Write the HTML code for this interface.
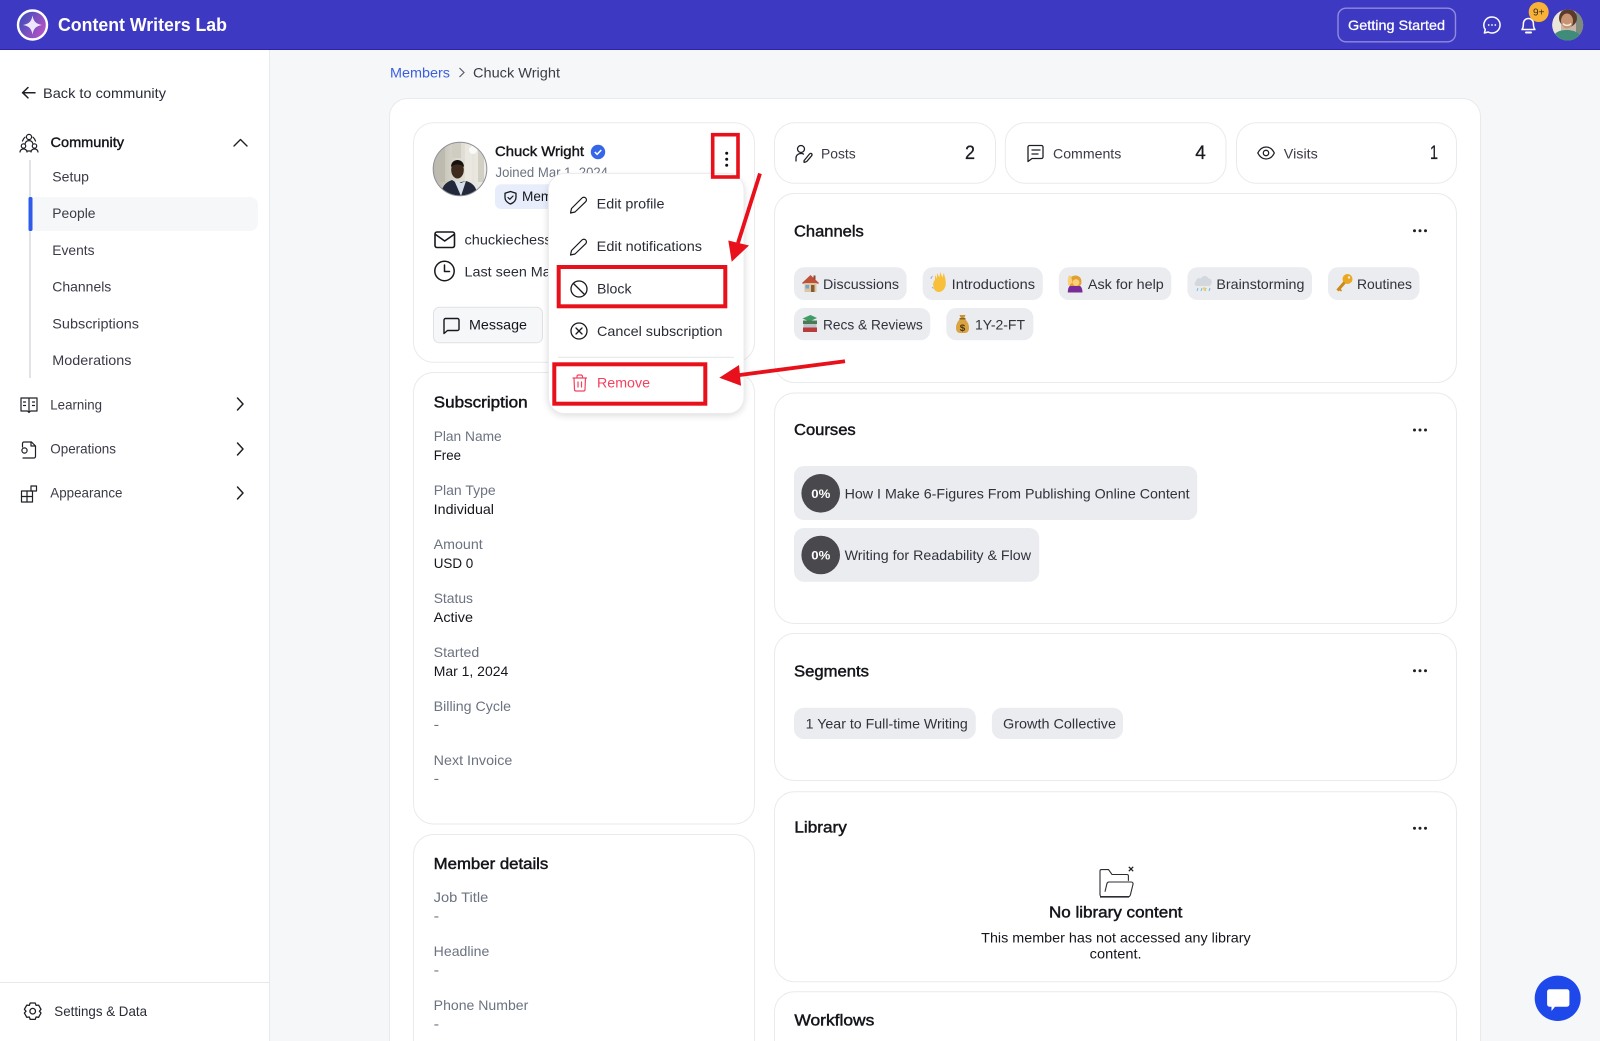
<!DOCTYPE html>
<html lang="en"><head><meta charset="utf-8"><title>Content Writers Lab - Chuck Wright</title>
<style>
html,body{margin:0;padding:0;width:1600px;height:1041px;overflow:hidden;background:#f6f7f9}
svg{display:block}
text{font-family:"Liberation Sans",sans-serif;font-size:14px;fill:#2a2c36}
.b{fill:#14151a;stroke:#14151a;stroke-width:.4}
.g{fill:#6b7280}
.d{fill:#15161c}
.t{font-size:15.5px;fill:#14151a;stroke:#14151a;stroke-width:.45}
.nav{fill:#3a3b46}
.chip{fill:#30323c}
.num{font-size:19px;fill:#1a1b20;stroke:#1a1b20;stroke-width:.3}
.card{fill:#fff;stroke:#e9eaed;stroke-width:1}
.c{fill:#ebecf0}
.i{fill:none;stroke:#17181d;stroke-width:1.5;stroke-linecap:round;stroke-linejoin:round}
.n{fill:none;stroke:#1f2026;stroke-width:1.3;stroke-linecap:round;stroke-linejoin:round}
.red{fill:none;stroke:#e8101a;stroke-width:4}
</style></head>
<body>
<svg width="1600" height="1041" viewBox="0 0 1600 1041" xmlns="http://www.w3.org/2000/svg">
<defs>
<linearGradient id="lg" x1="0" y1="0" x2="1" y2=".6"><stop offset="0" stop-color="#2a4cb8"/><stop offset="1" stop-color="#b552c6"/></linearGradient>
<linearGradient id="wall" x1="0" y1="0" x2="1" y2="0"><stop offset="0" stop-color="#b9b6a8"/><stop offset=".45" stop-color="#dcd9cf"/><stop offset="1" stop-color="#efeee9"/></linearGradient>
<clipPath id="av1"><circle cx="460" cy="169" r="26.5"/></clipPath>
<clipPath id="av2"><circle cx="1567.7" cy="25" r="15.5"/></clipPath>
<filter id="sh" x="-20%" y="-20%" width="140%" height="140%"><feGaussianBlur stdDeviation="4"/></filter>
</defs>

<!-- page bg -->
<rect width="1600" height="1041" fill="#f6f7f9"/>

<!-- sidebar -->
<rect x="0" y="49" width="269" height="992" fill="#fff"/>
<rect x="269" y="49" width="1" height="992" fill="#e9eaed"/>
<rect x="0" y="982" width="269" height="1" fill="#e6e7ea"/>

<!-- header -->
<rect width="1600" height="49.5" fill="#3e39c3"/>
<rect y="49" width="1600" height="1" fill="#2c22ad"/>
<circle cx="32.5" cy="25" r="14.5" fill="url(#lg)" stroke="#fff" stroke-width="2.4"/>
<path d="M32.5 15.5C33.6 21.5 36 23.9 42 25 36 26.1 33.6 28.5 32.5 34.5 31.4 28.5 29 26.1 23 25 29 23.9 31.4 21.5 32.5 15.5Z" fill="#ece7fb"/>
<text x="58" y="31" textLength="169" lengthAdjust="spacingAndGlyphs" style="font-size:18px;font-weight:700;fill:#fff">Content Writers Lab</text>
<rect x="1338" y="8.2" width="117.5" height="33.6" rx="8" fill="none" stroke="#8f8bdd" stroke-width="1.4"/>
<text x="1348" y="29.8" textLength="97" lengthAdjust="spacingAndGlyphs" style="fill:#fff;stroke:#fff;stroke-width:.25">Getting Started</text>
<path d="M1492 17a8 8 0 1 1-3.800 15l-3.800 1 .9-3.400A8 8 0 0 1 1492 17Z" fill="none" stroke="#fff" stroke-width="1.5" stroke-linejoin="round"/>
<circle cx="1488.700" cy="25" r=".9" fill="#fff"/><circle cx="1492" cy="25" r=".9" fill="#fff"/><circle cx="1495.300" cy="25" r=".9" fill="#fff"/>
<path d="M1522 29.500c1.200-1.600 1.400-3.200 1.400-6a5 5 0 0 1 10 0c0 2.800.3 4.400 1.500 6Z" fill="none" stroke="#fff" stroke-width="1.500" stroke-linejoin="round"/>
<path d="M1526 32.500h5" stroke="#fff" stroke-width="2" stroke-linecap="round"/>
<circle cx="1538.700" cy="12" r="10" fill="#f9b238"/>
<text x="1533" y="15.500" textLength="11.500" lengthAdjust="spacingAndGlyphs" style="font-size:10px;fill:#3a2f1a">9+</text>
<g clip-path="url(#av2)">
<rect x="1552" y="9" width="32" height="32" fill="#c9b8a8"/>
<rect x="1552" y="9" width="9" height="32" fill="#e9e6dc"/>
<rect x="1576" y="9" width="8" height="32" fill="#7d8a7c"/>
<ellipse cx="1568" cy="18" rx="9" ry="9" fill="#5a3b2b"/>
<ellipse cx="1567" cy="21" rx="6" ry="7.500" fill="#c79372"/>
<path d="M1563 23.500c2 2.500 6 2.500 8 0" stroke="#f4ece4" stroke-width="1.500" fill="none"/>
<path d="M1552 41c1-9 8-11 15-11s14 3 16 11Z" fill="#3f8c7a"/>
</g>

<!-- sidebar nav -->
<path d="M22.500 92.700h12.500M28 87.500l-5.300 5.200 5.300 5.200" class="n" style="stroke-width:1.500"/>
<text x="43" y="98" textLength="123" lengthAdjust="spacingAndGlyphs">Back to community</text>

<g class="n" style="stroke-width:1.200">
<circle cx="29" cy="137" r="2.600"/><path d="M25 144c.5-2.500 2-3.400 4-3.400s3.500.9 4 3.400"/>
<circle cx="23.500" cy="146" r="2.200"/><circle cx="34.500" cy="146" r="2.200"/>
<path d="M20 152c.3-2 1.700-3 3.500-3s3.200 1 3.500 3M31 152c.3-2 1.700-3 3.500-3s3.200 1 3.500 3M27 151h4M22.500 141c.7-2 1.500-3 2.500-3.800M35.500 141c-.7-2-1.500-3-2.500-3.800"/>
</g>
<text x="50.500" y="147" textLength="73.500" lengthAdjust="spacingAndGlyphs" class="b">Community</text>
<path d="M234 146l6.500-6.500 6.500 6.500" class="n" style="stroke-width:1.400"/>
<rect x="29" y="160" width="2" height="218" fill="#e2e3e6"/>
<rect x="29" y="197" width="229" height="34" rx="8" fill="#f6f7f9"/>
<rect x="28.500" y="197" width="4" height="34" rx="1.500" fill="#2f5bea"/>
<text class="nav" x="52.300" y="181.500" textLength="36.700" lengthAdjust="spacingAndGlyphs">Setup</text>
<text class="nav" x="52.300" y="218" textLength="43.200" lengthAdjust="spacingAndGlyphs">People</text>
<text class="nav" x="52.300" y="255" textLength="42.200" lengthAdjust="spacingAndGlyphs">Events</text>
<text class="nav" x="52.300" y="291.700" textLength="59" lengthAdjust="spacingAndGlyphs">Channels</text>
<text class="nav" x="52.300" y="328.300" textLength="86.700" lengthAdjust="spacingAndGlyphs">Subscriptions</text>
<text class="nav" x="52.300" y="365" textLength="79.200" lengthAdjust="spacingAndGlyphs">Moderations</text>

<g class="n" style="stroke-width:1.200">
<path d="M21 398h8v14.500l-1.500-1.500H21ZM37 398h-8v14.500l1.500-1.500H37Z"/><path d="M23.500 402h2M23.500 405.500h2M32.500 402h2M32.500 405.500h2"/>
</g>
<text class="nav" x="50.300" y="409.300" textLength="51.700" lengthAdjust="spacingAndGlyphs">Learning</text>
<path d="M237.500 398l5.500 6-5.500 6" class="n" style="stroke-width:1.500"/>

<g class="n" style="stroke-width:1.200">
<path d="M22.500 447v-3.500c0-.8.700-1.500 1.500-1.500h7.500l4 4v10.500c0 .8-.7 1.500-1.500 1.500H23"/><path d="M31 442v4h4.500"/><circle cx="24.500" cy="450.500" r="2.600"/>
</g>
<text class="nav" x="50.300" y="453.300" textLength="65.700" lengthAdjust="spacingAndGlyphs">Operations</text>
<path d="M237.500 443l5.500 6-5.500 6" class="n" style="stroke-width:1.500"/>

<g class="n" style="stroke-width:1.200">
<rect x="21.500" y="491" width="11" height="11"/><path d="M27 491v11M21.500 496.500h11"/><rect x="31" y="486" width="5.500" height="5"/>
</g>
<text class="nav" x="50.300" y="497.700" textLength="72.200" lengthAdjust="spacingAndGlyphs">Appearance</text>
<path d="M237.500 487l5.500 6-5.500 6" class="n" style="stroke-width:1.500"/>

<g class="n" style="stroke-width:1.300">
<path d="M30.200 1003h5l.9 2.400 2.500-.3 2.400 4.200-1.600 1.900 1.600 1.900-2.400 4.200-2.500-.3-.9 2.400h-5l-.9-2.400-2.500.3-2.400-4.200 1.600-1.900-1.600-1.900 2.400-4.200 2.500.3Z"/><circle cx="32.700" cy="1011.200" r="2.800"/>
</g>
<text x="54.300" y="1016" textLength="92.700" lengthAdjust="spacingAndGlyphs">Settings &amp; Data</text>

<!-- breadcrumb -->
<text x="390" y="77.500" textLength="60" lengthAdjust="spacingAndGlyphs" style="fill:#3b5ee0">Members</text>
<path d="M459.500 68l4.500 4.500-4.500 4.500" fill="none" stroke="#5a5d68" stroke-width="1.200"/>
<text x="473" y="77.500" textLength="87" lengthAdjust="spacingAndGlyphs" style="fill:#3a3b46">Chuck Wright</text>

<!-- main panel -->
<path d="M389.500 1041V116.500a18 18 0 0 1 18-18H1462.500a18 18 0 0 1 18 18V1041Z" fill="#fff"/>
<path d="M389.500 1041V116.500a18 18 0 0 1 18-18H1462.500a18 18 0 0 1 18 18V1041" fill="none" stroke="#e9eaed"/>

<!-- profile card -->
<rect x="413.500" y="122.700" width="341" height="239.600" rx="20" class="card"/>
<g clip-path="url(#av1)">
<rect x="433" y="142" width="54" height="54" fill="url(#wall)"/>
<rect x="436" y="142" width="9" height="40" fill="#bdbab0"/><rect x="452" y="142" width="9" height="16" fill="#cfccc1"/><rect x="465" y="142" width="7" height="40" fill="#e9e7df"/><rect x="478" y="142" width="6" height="40" fill="#d2cfc4"/>
<circle cx="473" cy="150" r="4" fill="#fafaf6"/>
<ellipse cx="457.500" cy="170" rx="6.300" ry="8.500" fill="#3f2a1e"/>
<path d="M451 167c0-4.500 3-7 6.500-7s6.500 2.500 6.500 7c-2-2-4-2.500-6.500-2.500s-4.500.5-6.500 2.500Z" fill="#17120f"/>
<path d="M441 198c0-10 3-15 11-18l5 3 9-2c7 2 11 6 12 17Z" fill="#23283a"/>
<path d="M454 180l7 16 5-15-5 2Z" fill="#d7deea"/>
</g>
<circle cx="460" cy="169" r="26.800" fill="none" stroke="#8c8d96" stroke-width="1"/>
<text x="495" y="156" textLength="89" lengthAdjust="spacingAndGlyphs" class="b">Chuck Wright</text>
<circle cx="598" cy="152" r="7.200" fill="#3565e8"/>
<path d="M594.800 152l2.300 2.300 4.200-4.300" fill="none" stroke="#fff" stroke-width="1.500"/>
<text class="g" x="495.500" y="177" textLength="112.500" lengthAdjust="spacingAndGlyphs">Joined Mar 1, 2024</text>
<rect x="495" y="184.300" width="70" height="24.700" rx="6" fill="#e8edfb"/>
<path d="M510.500 191.500l5.500 1.800v4c0 3.300-2.300 5.500-5.500 6.700-3.200-1.200-5.500-3.400-5.500-6.700v-4Z" class="i" style="stroke-width:1.300"/>
<path d="M508 197.500l1.800 1.800 3.200-3.300" class="i" style="stroke-width:1.200"/>
<text x="522" y="201" textLength="50" lengthAdjust="spacingAndGlyphs" class="d">Member</text>
<rect x="435" y="232" width="19.500" height="15.500" rx="2" class="i" style="stroke-width:1.600"/>
<path d="M435.500 234.500l9.200 6.500 9.300-6.500" class="i" style="stroke-width:1.600"/>
<text x="464.500" y="244.300" textLength="168" lengthAdjust="spacingAndGlyphs">chuckiechess@gmail.com</text>
<circle cx="444.500" cy="271" r="9.700" class="i" style="stroke-width:1.500"/>
<path d="M444.500 265v6.500h5" class="i" style="stroke-width:1.500"/>
<text x="464.500" y="276.700" textLength="143" lengthAdjust="spacingAndGlyphs">Last seen Mar 1, 2024</text>
<rect x="433.500" y="307.300" width="109" height="35.500" rx="6" fill="#f6f7f9" stroke="#dfe1e5"/>
<path d="M445.500 318.500h12c.8 0 1.500.7 1.500 1.500v9c0 .8-.7 1.500-1.500 1.500h-10l-3.500 3v-13.500c0-.8.700-1.500 1.500-1.500Z" class="i" style="stroke-width:1.400"/>
<text x="469" y="329.300" textLength="58" lengthAdjust="spacingAndGlyphs" class="d">Message</text>
<circle cx="726.700" cy="153.300" r="1.500" fill="#111"/><circle cx="726.700" cy="159.300" r="1.500" fill="#111"/><circle cx="726.700" cy="165.200" r="1.500" fill="#111"/>

<!-- subscription card -->
<rect x="413.500" y="372.500" width="341" height="451.500" rx="20" class="card"/>
<text x="433.700" y="407.400" textLength="94" lengthAdjust="spacingAndGlyphs" class="t">Subscription</text>
<text class="g" x="433.700" y="441" textLength="68" lengthAdjust="spacingAndGlyphs">Plan Name</text>
<text class="d" x="433.700" y="460" textLength="27.300" lengthAdjust="spacingAndGlyphs">Free</text>
<text class="g" x="433.700" y="495" textLength="62" lengthAdjust="spacingAndGlyphs">Plan Type</text>
<text class="d" x="433.700" y="514" textLength="60.300" lengthAdjust="spacingAndGlyphs">Individual</text>
<text class="g" x="433.700" y="549" textLength="49" lengthAdjust="spacingAndGlyphs">Amount</text>
<text class="d" x="433.700" y="568" textLength="39.600" lengthAdjust="spacingAndGlyphs">USD 0</text>
<text class="g" x="433.700" y="603" textLength="39.300" lengthAdjust="spacingAndGlyphs">Status</text>
<text class="d" x="433.700" y="622" textLength="39.300" lengthAdjust="spacingAndGlyphs">Active</text>
<text class="g" x="433.700" y="657" textLength="45.600" lengthAdjust="spacingAndGlyphs">Started</text>
<text class="d" x="433.700" y="676" textLength="74.600" lengthAdjust="spacingAndGlyphs">Mar 1, 2024</text>
<text class="g" x="433.700" y="711" textLength="77.300" lengthAdjust="spacingAndGlyphs">Billing Cycle</text>
<text class="g" x="433.700" y="729" textLength="5.500" lengthAdjust="spacingAndGlyphs">-</text>
<text class="g" x="433.700" y="765" textLength="78.600" lengthAdjust="spacingAndGlyphs">Next Invoice</text>
<text class="g" x="433.700" y="783" textLength="5.500" lengthAdjust="spacingAndGlyphs">-</text>

<!-- member details -->
<path d="M413.500 1041V854.500a20 20 0 0 1 20-20H734.500a20 20 0 0 1 20 20V1041" class="card"/>
<text x="433.700" y="869" textLength="114.600" lengthAdjust="spacingAndGlyphs" class="t">Member details</text>
<text class="g" x="433.700" y="902" textLength="54.600" lengthAdjust="spacingAndGlyphs">Job Title</text>
<text class="g" x="433.700" y="920.500" textLength="5.500" lengthAdjust="spacingAndGlyphs">-</text>
<text class="g" x="433.700" y="956" textLength="55.600" lengthAdjust="spacingAndGlyphs">Headline</text>
<text class="g" x="433.700" y="974.500" textLength="5.500" lengthAdjust="spacingAndGlyphs">-</text>
<text class="g" x="433.700" y="1010" textLength="94.600" lengthAdjust="spacingAndGlyphs">Phone Number</text>
<text class="g" x="433.700" y="1028.500" textLength="5.500" lengthAdjust="spacingAndGlyphs">-</text>

<!-- stat cards -->
<rect x="774.500" y="122.700" width="221" height="60.600" rx="20" class="card"/>
<rect x="1005.300" y="122.700" width="220.700" height="60.600" rx="20" class="card"/>
<rect x="1236.500" y="122.700" width="220" height="60.600" rx="20" class="card"/>
<g class="n" style="stroke-width:1.300">
<circle cx="801" cy="149" r="3.500"/><path d="M796 161v-3c0-2.500 2-4.500 5-4.500 1 0 1.800.2 2.500.6"/><path d="M805 159.500l4.500-5.500c.7-.8 1.800-.8 2.200-.2.500.6.400 1.500-.3 2.300l-4.500 5.200c-.8.800-2.800 1-2.800 1s-.5-1.800.9-2.800Z"/>
</g>
<text x="821" y="158.300" textLength="34.700" lengthAdjust="spacingAndGlyphs" class="nav">Posts</text>
<text x="965" y="159" textLength="10" lengthAdjust="spacingAndGlyphs" class="num">2</text>
<path d="M1029.500 145.500h12c.8 0 1.500.7 1.500 1.500v10c0 .8-.7 1.500-1.500 1.500h-9.500l-4 3v-14.500c0-.8.700-1.500 1.500-1.500Z" class="n"/>
<path d="M1032 150h8M1032 154h6" class="n"/>
<text x="1053" y="158.300" textLength="68.300" lengthAdjust="spacingAndGlyphs" class="nav">Comments</text>
<text x="1195.300" y="159" textLength="10.500" lengthAdjust="spacingAndGlyphs" class="num">4</text>
<path d="M1257.800 153c2-4 5-6 8.300-6s6.300 2 8.200 6c-1.900 4-4.900 6-8.200 6s-6.300-2-8.300-6Z" class="n"/>
<circle cx="1266" cy="153" r="2.700" class="n"/>
<text x="1283.800" y="158.300" textLength="34" lengthAdjust="spacingAndGlyphs" class="nav">Visits</text>
<text x="1430" y="159" textLength="8" lengthAdjust="spacingAndGlyphs" class="num">1</text>

<!-- channels -->
<rect x="774.500" y="193.500" width="682" height="189" rx="20" class="card"/>
<text x="794" y="236.700" textLength="69.800" lengthAdjust="spacingAndGlyphs" class="t">Channels</text>
<g fill="#222"><circle cx="1414.500" cy="230.700" r="1.500"/><circle cx="1420" cy="230.700" r="1.500"/><circle cx="1425.500" cy="230.700" r="1.500"/></g>

<rect class="c" x="794" y="267.300" width="112.600" height="32.700" rx="10"/>
<rect class="c" x="922.700" y="267.300" width="120.100" height="32.700" rx="10"/>
<rect class="c" x="1058.800" y="267.300" width="112.500" height="32.700" rx="10"/>
<rect class="c" x="1187.400" y="267.300" width="124.600" height="32.700" rx="10"/>
<rect class="c" x="1328" y="267.300" width="91.500" height="32.700" rx="10"/>
<rect class="c" x="794" y="308" width="136.300" height="32.300" rx="10"/>
<rect class="c" x="946.300" y="308" width="87.100" height="32.300" rx="10"/>

<!-- house -->
<path d="M802.500 283.500l8-7.500 8 7.500" fill="#c0503a" stroke="#c0503a" stroke-width="1.500"/>
<rect x="804.500" y="283" width="12" height="9" fill="#d9c6a2"/>
<rect x="805.500" y="285" width="3.500" height="3.500" fill="#6fa6d8"/><rect x="811" y="285" width="3.500" height="7" fill="#8a5a33"/>
<rect x="813.500" y="275.500" width="2" height="4" fill="#8a4a33"/>
<text class="chip" x="823" y="289" textLength="76" lengthAdjust="spacingAndGlyphs">Discussions</text>

<!-- wave -->
<path d="M933.500 283l.5-3 1 1 0-6 1.800 3.500.3-5.500 2.200 4.500 1-5.500 2 5.500 1.500-4.500 1.500 5.500.5 4c.5 5-3 9.500-7 9.500s-5.500-3.500-5.800-9Z" fill="#f8c03a"/>
<path d="M931 279c0-1 .5-2 1.500-3M932 287l1.500 1.500" stroke="#9fb0c4" stroke-width="1" fill="none"/>
<text class="chip" x="951.700" y="289" textLength="83.300" lengthAdjust="spacingAndGlyphs">Introductions</text>

<!-- raise hand -->
<path d="M1067.800 292.500c0-6 2-8 7-8s7.700 2 7.700 8Z" fill="#7a2b9a"/>
<path d="M1069 282c0-4 3-6.500 6.500-6.500s6 2.500 6 6.500c0 2-1 3.500-2 4h-9c-1-.5-1.500-2-1.500-4Z" fill="#e0a032"/>
<circle cx="1076" cy="282.500" r="3.400" fill="#fbcf7a"/>
<path d="M1068.500 286c-1-3-.8-7 0-10l2.500-.5 1.500 7Z" fill="#fbcf7a"/>
<text class="chip" x="1087.900" y="289" textLength="75.900" lengthAdjust="spacingAndGlyphs">Ask for help</text>

<!-- cloud -->
<path d="M1197 286c-2.500 0-3.500-3.500-1-4.500 0-3 3-4 5-3 1-3 6-3.500 7.500 0 3-.5 4.500 4 2 6.500 0 1-1 1-2 1Z" fill="#d3d8df"/>
<path d="M1198 288l-1 3M1202 288l-1 3M1206 288l-1 3M1210 288l-1 3" stroke="#75b5e6" stroke-width="1"/>
<path d="M1204.500 287l-1 2h2l-1 2" stroke="#f5c63b" stroke-width="1" fill="none"/>
<text class="chip" x="1216.400" y="289" textLength="88" lengthAdjust="spacingAndGlyphs">Brainstorming</text>

<!-- key -->
<circle cx="1347.500" cy="279" r="5" fill="#eba71f"/>
<circle cx="1349" cy="277.500" r="1.200" fill="#ebecf0"/>
<path d="M1344.500 282.500l-7 8" stroke="#c98a17" stroke-width="3"/>
<path d="M1339.500 289l2 2" stroke="#c98a17" stroke-width="1.600"/>
<text class="chip" x="1357" y="289" textLength="55" lengthAdjust="spacingAndGlyphs">Routines</text>

<!-- books -->
<path d="M802.500 318.500l8-3.500 6.500 3-7.500 3.500Z" fill="#3e9c64"/>
<rect x="803" y="320.500" width="14" height="3.500" fill="#4a7a58"/>
<rect x="803.500" y="324" width="13" height="3.500" fill="#bcc4cc"/>
<rect x="803" y="327.500" width="14" height="4.500" fill="#b83c3c"/>
<text class="chip" x="823" y="329.300" textLength="99.700" lengthAdjust="spacingAndGlyphs">Recs &amp; Reviews</text>

<!-- bag -->
<path d="M960 319c-3 3-4 6-4 9 0 3 1.500 5 4 5h5c2.500 0 4-2 4-5 0-3-1-6-4-9Z" fill="#d9a441"/>
<path d="M959.500 315h6l-1.500 3.500h-3Z" fill="#c89234"/>
<rect x="959.500" y="318" width="6" height="1.500" fill="#8a6420"/>
<text x="959.800" y="331" textLength="5.500" lengthAdjust="spacingAndGlyphs" style="font-size:9px;font-weight:700;fill:#4b3410">$</text>
<text class="chip" x="975" y="329.300" textLength="50" lengthAdjust="spacingAndGlyphs">1Y-2-FT</text>

<!-- courses -->
<rect x="774.500" y="393" width="682" height="230.500" rx="20" class="card"/>
<text x="794" y="435" textLength="61.700" lengthAdjust="spacingAndGlyphs" class="t">Courses</text>
<g fill="#222"><circle cx="1414.500" cy="430" r="1.500"/><circle cx="1420" cy="430" r="1.500"/><circle cx="1425.500" cy="430" r="1.500"/></g>
<rect class="c" x="794" y="466" width="403.200" height="54" rx="10"/>
<circle cx="820.700" cy="493.300" r="19.300" fill="#48484d"/>
<text x="811.300" y="497.800" textLength="19" lengthAdjust="spacingAndGlyphs" style="font-size:12px;font-weight:700;fill:#fff">0%</text>
<text class="chip" x="844.600" y="498.300" textLength="345" lengthAdjust="spacingAndGlyphs">How I Make 6-Figures From Publishing Online Content</text>
<rect class="c" x="794" y="528" width="245.200" height="53.700" rx="10"/>
<circle cx="820.700" cy="555" r="19.300" fill="#48484d"/>
<text x="811.300" y="559.500" textLength="19" lengthAdjust="spacingAndGlyphs" style="font-size:12px;font-weight:700;fill:#fff">0%</text>
<text class="chip" x="844.600" y="560" textLength="186.400" lengthAdjust="spacingAndGlyphs">Writing for Readability &amp; Flow</text>

<!-- segments -->
<rect x="774.500" y="633.500" width="682" height="147" rx="20" class="card"/>
<text x="794" y="676.700" textLength="75" lengthAdjust="spacingAndGlyphs" class="t">Segments</text>
<g fill="#222"><circle cx="1414.500" cy="670.700" r="1.500"/><circle cx="1420" cy="670.700" r="1.500"/><circle cx="1425.500" cy="670.700" r="1.500"/></g>
<rect class="c" x="794" y="707.700" width="181.800" height="31.300" rx="10"/>
<text class="chip" x="805.700" y="728.300" textLength="162.100" lengthAdjust="spacingAndGlyphs">1 Year to Full-time Writing</text>
<rect class="c" x="991.900" y="707.700" width="131.100" height="31.300" rx="10"/>
<text class="chip" x="1003" y="728.300" textLength="113" lengthAdjust="spacingAndGlyphs">Growth Collective</text>

<!-- library -->
<rect x="774.500" y="791.700" width="682" height="190" rx="20" class="card"/>
<text x="794.400" y="832.700" textLength="52.400" lengthAdjust="spacingAndGlyphs" class="t">Library</text>
<g fill="#222"><circle cx="1414.500" cy="828.300" r="1.500"/><circle cx="1420" cy="828.300" r="1.500"/><circle cx="1425.500" cy="828.300" r="1.500"/></g>
<path d="M1100 895v-24c0-.8.600-1.400 1.400-1.400h7.100l3.500 4.900h15c.8 0 1.400.6 1.400 1.400v5" fill="none" stroke="#2c2d33" stroke-width="1.100"/>
<path d="M1100 894.500c0 1.300.9 2.300 2 2.300h26c1.200 0 2-.7 2.400-2l2.600-10.500c.3-1.300-.5-2.300-1.700-2.300h-22.300c-1.100 0-1.800.6-2.100 1.700l-1.900 8" fill="none" stroke="#2c2d33" stroke-width="1.100"/>
<path d="M1100 896.800h29" stroke="#2c2d33" stroke-width="1.600"/>
<path d="M1128.800 866.800l4.400 4.400M1133.200 866.800l-4.400 4.400" stroke="#222" stroke-width="1.300"/>
<text x="1049" y="917.300" textLength="133.400" lengthAdjust="spacingAndGlyphs" class="t">No library content</text>
<text x="981.200" y="942.300" textLength="269.500" lengthAdjust="spacingAndGlyphs" class="d">This member has not accessed any library</text>
<text x="1089.700" y="958.300" textLength="51.900" lengthAdjust="spacingAndGlyphs" class="d">content.</text>

<!-- workflows -->
<path d="M774.500 1041V1011.700a20 20 0 0 1 20-20H1436.500a20 20 0 0 1 20 20V1041" class="card"/>
<text x="794.400" y="1025.700" textLength="79.900" lengthAdjust="spacingAndGlyphs" class="t">Workflows</text>

<!-- dropdown menu -->
<rect x="548.500" y="177" width="195.500" height="238" rx="16" fill="#000" opacity=".16" filter="url(#sh)"/>
<rect x="548.500" y="173.500" width="195.500" height="240" rx="16" fill="#fff" stroke="#ececef"/>
<path d="M570.500 213l1-4.500 10.500-10.500c1-1 2.700-1 3.700 0s1 2.700 0 3.700L575 212Z" class="i" style="stroke-width:1.200"/>
<text x="596.700" y="208.300" textLength="67.800" lengthAdjust="spacingAndGlyphs">Edit profile</text>
<path d="M570.500 255l1-4.500 10.500-10.500c1-1 2.700-1 3.700 0s1 2.700 0 3.700L575 254Z" class="i" style="stroke-width:1.200"/>
<text x="596.700" y="251" textLength="105.300" lengthAdjust="spacingAndGlyphs">Edit notifications</text>
<circle cx="579" cy="289" r="8" class="i" style="stroke-width:1.300"/>
<path d="M573.500 283.500l11 11" class="i" style="stroke-width:1.300"/>
<text x="597" y="293.300" textLength="34.500" lengthAdjust="spacingAndGlyphs">Block</text>
<circle cx="579" cy="331" r="8" class="i" style="stroke-width:1.300"/>
<path d="M576 328l6 6M582 328l-6 6" class="i" style="stroke-width:1.300"/>
<text x="597" y="336" textLength="125.500" lengthAdjust="spacingAndGlyphs">Cancel subscription</text>
<rect x="558" y="356.800" width="176" height="1" fill="#e3e4e7"/>
<g fill="none" stroke="#f5405f" stroke-width="1.200" stroke-linejoin="round" stroke-linecap="round">
<path d="M573 378h13.500M577 378v-1.500c0-.8.600-1.500 1.500-1.500h2.500c.8 0 1.500.7 1.500 1.500v1.500M574 378l.5 11.500c0 .9.700 1.500 1.500 1.500h7.500c.8 0 1.500-.6 1.500-1.500l.5-11.500M578 382v5M581.500 382v5"/>
</g>
<text x="597" y="387.300" textLength="53" lengthAdjust="spacingAndGlyphs" style="fill:#f5405f">Remove</text>

<!-- annotations -->
<rect class="red" x="712.700" y="134.700" width="25.300" height="42.300" style="stroke-width:3.600"/>
<rect class="red" x="558.700" y="267" width="166.600" height="39.300"/>
<rect class="red" x="554.300" y="364.300" width="151" height="39.400"/>
<path d="M760 173.500L738 243" stroke="#e8101a" stroke-width="3.800" fill="none"/>
<path d="M731.700 261.700L728.300 240.500 749 245.500Z" fill="#e8101a"/>
<path d="M845 361.200L736 375.500" stroke="#e8101a" stroke-width="3.800" fill="none"/>
<path d="M719.300 377.700L739 365 741 385.700Z" fill="#e8101a"/>

<!-- chat launcher -->
<ellipse cx="1557.700" cy="998.300" rx="23" ry="22.700" fill="#1f48ea"/>
<path d="M1549.500 989.300h17.500c1.300 0 2.400 1.100 2.400 2.400v12.600c0 1.300-1.100 2.400-2.400 2.400h-12l-3.500 4.300v-4.300h-2c-1.300 0-2.400-1.100-2.400-2.400v-12.600c0-1.300 1.100-2.400 2.400-2.400Z" fill="#fff"/>
</svg>
</body></html>
